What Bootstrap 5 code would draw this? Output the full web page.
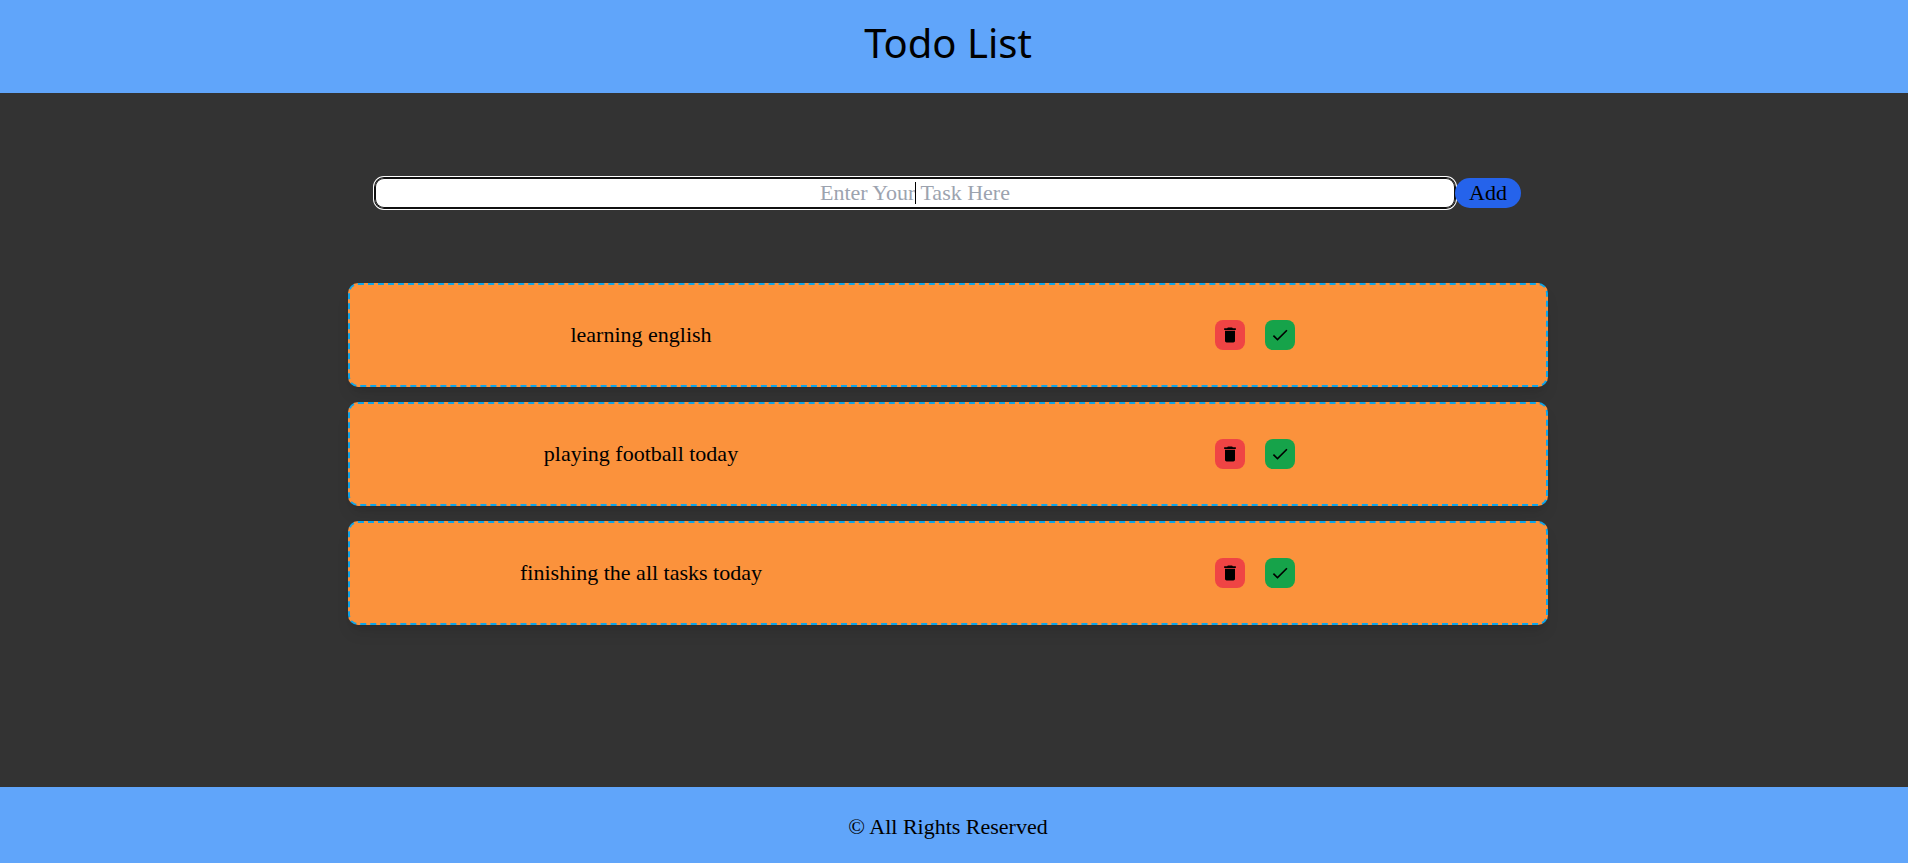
<!DOCTYPE html>
<html lang="en">
<head>
<meta charset="utf-8">
<meta name="viewport" content="width=device-width, initial-scale=1">
<title>Todo List</title>
<link href="https://cdn.jsdelivr.net/npm/bootstrap@5.3.0/dist/css/bootstrap.min.css" rel="stylesheet">
<style>
  body { background: #333; color: #000; font-family: Georgia, "Liberation Serif", serif; font-size: 22px; line-height: 30px; }
  .bar { background: #60a5fa; padding-right: 12px; }
  .bar-top { padding-top: 13px; padding-bottom: 20px; }
  .bar-bottom { padding-top: 25px; padding-bottom: 21px; }
  .bar h1 { font-family: "Noto Sans", sans-serif; font-size: 40px; font-weight: 400; line-height: 60px; }
  main { padding-right: 12px; }
  .board { width: 100%; max-width: 1200px; }
  .entry { padding-top: 85px; margin-bottom: 75px; }
  .entry-field { width: 90%; }
  .entry-field input { height: 30px; border: 0; border-radius: 9px; background: #fff; color: #000; outline: 0;
    box-shadow: inset 0 0 0 1px #101010, 0 0 0 1px #101010, 0 0 0 2px #fff; }
  .entry-field input::placeholder { color: #9ca3af; opacity: 1; }
  .caret { left: 50%; top: 4px; width: 1px; height: 22px; background: #000; }
  .add { width: 66px; height: 30px; background: #2563eb; color: #000; }
  .tasks { gap: 15px; }
  .task { display: grid; grid-template-columns: 1fr 1fr; gap: 32px; height: 104px; background: #fb923c;
    border: 2px dashed #0ea5e9; border-radius: 10px; box-shadow: 0 10px 15px -3px rgba(0,0,0,.1), 0 4px 6px -4px rgba(0,0,0,.1); }
  .actions { gap: 20px; }
  .act { width: 30px; height: 30px; border-radius: 8px; }
  .act svg { width: 20px; height: 20px; }
  .act-delete { background: #ef4444; }
  .act-done { background: #16a34a; }
</style>
</head>
<body class="d-flex flex-column min-vh-100">
<header class="bar bar-top text-center"><h1 class="m-0">Todo List</h1></header>

<main class="flex-grow-1 d-flex flex-column align-items-center">
  <form class="board entry d-flex justify-content-center">
    <div class="entry-field position-relative">
      <input type="text" class="d-block w-100 p-0 text-center" placeholder="Enter Your Task Here" aria-label="Task">
      <span class="caret position-absolute"></span>
    </div>
    <button type="button" class="add border-0 rounded-pill p-0 position-relative flex-shrink-0">Add</button>
  </form>

  <ul class="board tasks list-unstyled d-flex flex-column m-0">
    <li class="task align-items-center text-center">
      <span>learning english</span>
      <div class="actions d-flex justify-content-center">
        <button type="button" class="act act-delete border-0 p-0 d-flex align-items-center justify-content-center" aria-label="Delete"><svg viewBox="0 0 24 24"><path d="M6 19c0 1.1.9 2 2 2h8c1.1 0 2-.9 2-2V7H6v12zM19 4h-3.5l-1-1h-5l-1 1H5v2h14V4z"/></svg></button>
        <button type="button" class="act act-done border-0 p-0 d-flex align-items-center justify-content-center" aria-label="Done"><svg viewBox="0 0 24 24"><path d="M9 16.2 4.8 12l-1.4 1.4L9 19 21 7l-1.4-1.4L9 16.2z"/></svg></button>
      </div>
    </li>
    <li class="task align-items-center text-center">
      <span>playing football today</span>
      <div class="actions d-flex justify-content-center">
        <button type="button" class="act act-delete border-0 p-0 d-flex align-items-center justify-content-center" aria-label="Delete"><svg viewBox="0 0 24 24"><path d="M6 19c0 1.1.9 2 2 2h8c1.1 0 2-.9 2-2V7H6v12zM19 4h-3.5l-1-1h-5l-1 1H5v2h14V4z"/></svg></button>
        <button type="button" class="act act-done border-0 p-0 d-flex align-items-center justify-content-center" aria-label="Done"><svg viewBox="0 0 24 24"><path d="M9 16.2 4.8 12l-1.4 1.4L9 19 21 7l-1.4-1.4L9 16.2z"/></svg></button>
      </div>
    </li>
    <li class="task align-items-center text-center">
      <span>finishing the all tasks today</span>
      <div class="actions d-flex justify-content-center">
        <button type="button" class="act act-delete border-0 p-0 d-flex align-items-center justify-content-center" aria-label="Delete"><svg viewBox="0 0 24 24"><path d="M6 19c0 1.1.9 2 2 2h8c1.1 0 2-.9 2-2V7H6v12zM19 4h-3.5l-1-1h-5l-1 1H5v2h14V4z"/></svg></button>
        <button type="button" class="act act-done border-0 p-0 d-flex align-items-center justify-content-center" aria-label="Done"><svg viewBox="0 0 24 24"><path d="M9 16.2 4.8 12l-1.4 1.4L9 19 21 7l-1.4-1.4L9 16.2z"/></svg></button>
      </div>
    </li>
  </ul>
</main>

<footer class="bar bar-bottom text-center">© All Rights Reserved</footer>
<script src="https://cdn.jsdelivr.net/npm/bootstrap@5.3.0/dist/js/bootstrap.bundle.min.js"></script>
</body>
</html>
